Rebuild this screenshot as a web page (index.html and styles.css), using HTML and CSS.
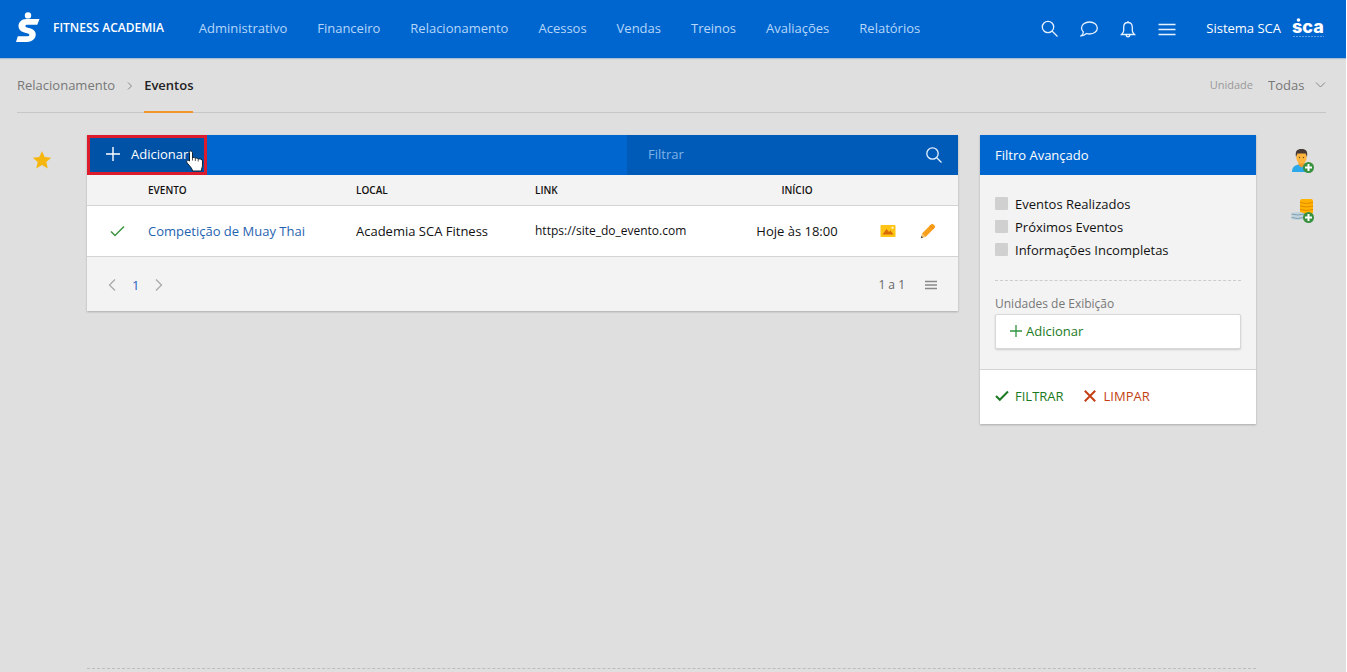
FILE: index.html
```html
<!DOCTYPE html>
<html lang="pt-BR">
<head>
<meta charset="utf-8">
<title>Eventos</title>
<link rel="stylesheet" href="styles.css">
</head>
<body>
<header class="topbar">
  <a class="brand" href="#">
    <svg class="brand-mark" width="24" height="32" viewBox="0 0 24 32" aria-hidden="true">
      <circle cx="12" cy="3.400" r="3.200" fill="#fff"/>
      <path d="M23.500 7L21.300 12.700H11.500C8.800 12.700 8.600 14.800 11 15.500L14.800 16.600C23 19 20.500 30 11 30H0L1.800 24.200H10.800C13.800 24.200 14.200 22.200 11.800 21.500L7.500 20.200C-0.500 17.800 1.500 7 10.500 7Z" fill="#fff"/>
    </svg>
    <span class="brand-name">FITNESS ACADEMIA</span>
  </a>
  <nav class="menu">
    <a href="#">Administrativo</a>
    <a href="#">Financeiro</a>
    <a href="#">Relacionamento</a>
    <a href="#">Acessos</a>
    <a href="#">Vendas</a>
    <a href="#">Treinos</a>
    <a href="#">Avaliações</a>
    <a href="#">Relatórios</a>
  </nav>
  <div class="tools">
    <button class="icon-btn" aria-label="Buscar"><svg width="18" height="18" viewBox="0 0 18 18"><circle cx="7" cy="7" r="5.700"/><path d="M11 11l5.500 5.500"/></svg></button>
    <button class="icon-btn" aria-label="Mensagens"><svg width="18" height="18" viewBox="0 0 18 18"><path d="M9.500 2C14 2 17.300 4.500 17.300 8S14 14 9.500 14C8.300 14 7.300 13.800 6.500 13.500C5 14.800 3.500 15.700 1.200 15.800C2.600 14.800 3.200 13.500 3.400 12C2.200 11 1.500 9.600 1.500 8C1.500 4.500 5 2 9.500 2Z"/></svg></button>
    <button class="icon-btn" aria-label="Notificações"><svg width="18" height="18" viewBox="0 0 18 18"><path d="M9 2.500C6.300 2.500 4.700 4.300 4.700 7V10.500C4.700 12.500 3.600 13.300 2.500 14.500H15.500C14.400 13.300 13.300 12.500 13.300 10.500V7C13.300 4.300 11.700 2.500 9 2.500ZM9 2.500V1M7.200 14.800C7.200 17.500 10.800 17.500 10.800 14.800"/></svg></button>
    <button class="icon-btn" aria-label="Menu"><svg width="18" height="18" viewBox="0 0 18 18"><path d="M0.500 4.500H17.500M0.500 9.500H17.500M0.500 14.500H17.500"/></svg></button>
  </div>
  <a class="account" href="#">
    <span>Sistema SCA</span>
    <svg width="34" height="22" viewBox="0 0 34 22" aria-hidden="true">
      <circle cx="6.500" cy="3" r="1.800" fill="#fff"/>
      <text class="account-logo" x="0" y="16">sca</text>
      <path d="M1 19.500H32" stroke="#5c9fe4" stroke-dasharray="2 1"/>
    </svg>
  </a>
</header>

<div class="page">
  <div class="crumbs">
    <a class="crumb" href="#">Relacionamento</a>
    <svg class="crumb-sep" width="6" height="10" viewBox="0 0 6 10"><path d="M1 1.500L4.500 5L1 8.500"/></svg>
    <a class="crumb crumb-current" href="#">Eventos</a>
    <label class="unit-label" for="unit">Unidade</label>
    <span class="unit-box">
      <select class="unit" id="unit"><option>Todas</option></select>
      <svg width="11" height="8" viewBox="0 0 11 8"><path d="M1 1.500L5.500 6L10 1.500"/></svg>
    </span>
  </div>

  <div class="content">
    <div class="rail rail-left">
      <button class="plain" aria-label="Favorito"><svg width="20" height="20" viewBox="0 0 20 20"><path d="M10 1L12.700 7.100L19.200 7.700L14.300 12L15.800 18.500L10 15.100L4.200 18.500L5.700 12L0.800 7.700L7.300 7.100Z" fill="#f5b70f"/></svg></button>
    </div>

    <main class="panel">
      <div class="panel-bar">
        <button class="add">
          <svg width="14" height="14" viewBox="0 0 14 14"><path d="M7 0V14M0 7H14"/></svg>
          Adicionar
          <svg class="cursor" width="18" height="22" viewBox="0 0 18 22"><path d="M4.500 1C6 1 6.500 2 6.500 3V8C7 7 9 7.200 9.300 8.500C10 7.600 12 8 12.200 9.200C13.500 8.600 16.500 9 16.500 11V15C16.500 17 15.500 18 15.500 21H6.500C6.500 18.500 3.500 16 1 12.800C-0.200 10.500 2 9.500 3.500 11V3C3 2 3.500 1 4.500 1Z" fill="#fff" stroke="#123"/><path d="M6.500 8V10.500M9.300 8.500V11M12.200 9.200V11.500" stroke="#555" fill="none"/></svg>
        </button>
        <div class="search">
          <input class="search-input" type="text" placeholder="Filtrar" aria-label="Filtrar">
          <button class="icon-btn" aria-label="Pesquisar"><svg width="18" height="18" viewBox="0 0 18 18"><circle cx="7.500" cy="7.500" r="5.700"/><path d="M11.500 11.500l5 5"/></svg></button>
        </div>
      </div>
      <table class="events">
        <colgroup><col class="c-check"><col class="c-event"><col class="c-place"><col><col class="c-start"><col class="c-actions"></colgroup>
        <thead>
          <tr><th></th><th>EVENTO</th><th>LOCAL</th><th>LINK</th><th class="center">INÍCIO</th><th></th></tr>
        </thead>
        <tbody>
          <tr>
            <td class="center"><svg class="ok" width="15" height="12" viewBox="0 0 15 12"><path d="M1 6.500L5 10.500L14 1.500"/></svg></td>
            <td><a class="event-link" href="#">Competição de Muay Thai</a></td>
            <td>Academia SCA Fitness</td>
            <td class="small">https://site_do_evento.com</td>
            <td class="center">Hoje às 18:00</td>
            <td>
              <div class="actions">
                <button class="plain" aria-label="Imagem"><svg width="16" height="14" viewBox="0 0 16 14"><rect x="0.500" y="1" width="15" height="12" rx="1" fill="#ffc414"/><path d="M2.500 10.500L6.500 5L9 8L10.500 6.500L13.500 10.500Z" fill="#d96b05"/><circle cx="12.500" cy="3.800" r="1.200" fill="#fff1b8"/></svg></button>
                <button class="plain" aria-label="Editar"><svg width="16" height="16" viewBox="0 0 16 16"><path d="M11.200 1.200C12 0.500 12.600 0.500 13.300 1.200L14.800 2.700C15.400 3.400 15.400 4 14.800 4.700L5.500 14L2 10.400Z" fill="#f9a01b"/><path d="M2 10.400L5.500 14L1 15.200Z" fill="#f3c36b"/><path d="M1.500 13L3 14.600L0.800 15.300Z" fill="#333"/><path d="M10 2.500L13.500 6" stroke="#ef7d0b"/></svg></button>
              </div>
            </td>
          </tr>
        </tbody>
      </table>
      <div class="pager">
        <button class="plain page-arrow" aria-label="Anterior"><svg width="8" height="14" viewBox="0 0 8 14"><path d="M7 1.500L1.500 7L7 12.500"/></svg></button>
        <a class="page-number" href="#">1</a>
        <button class="plain page-arrow" aria-label="Próxima"><svg width="8" height="14" viewBox="0 0 8 14"><path d="M1 1.500L6.500 7L1 12.500"/></svg></button>
        <span class="range">1 a 1</span>
        <button class="plain page-list" aria-label="Opções"><svg width="12" height="10" viewBox="0 0 12 10"><path d="M0 1.500H12M0 5H12M0 8.500H12"/></svg></button>
      </div>
    </main>

    <aside class="filter">
      <h2 class="filter-title">Filtro Avançado</h2>
      <div class="filter-body">
        <label class="check"><input type="checkbox">Eventos Realizados</label>
        <label class="check"><input type="checkbox">Próximos Eventos</label>
        <label class="check"><input type="checkbox">Informações Incompletas</label>
        <div class="units">
          <span class="units-label" id="units-label">Unidades de Exibição</span>
          <button class="units-add" aria-describedby="units-label"><svg width="12" height="12" viewBox="0 0 12 12"><path d="M6 0V12M0 6H12"/></svg>Adicionar</button>
        </div>
      </div>
      <div class="filter-actions">
        <button class="plain apply"><svg width="14" height="12" viewBox="0 0 14 12"><path d="M1 6L4.800 9.800L13 1.500"/></svg>FILTRAR</button>
        <button class="plain clear"><svg width="12" height="12" viewBox="0 0 12 12"><path d="M0.800 0.800L11.200 11.200M11.200 0.800L0.800 11.200"/></svg>LIMPAR</button>
      </div>
    </aside>

    <div class="rail rail-right">
      <button class="plain" aria-label="Novo cliente"><svg width="24" height="26" viewBox="0 0 24 26">
        <path d="M1 24C1 19 4 17 8 16.500H13C17 17 19 19 19 24Z" fill="#2ca9e8"/>
        <path d="M7.500 14H13.500V17L10.500 19.500L7.500 17Z" fill="#f09a2c"/>
        <ellipse cx="10.500" cy="9.500" rx="5.200" ry="6.300" fill="#ffb53d"/>
        <path d="M5 9C4 3 6 1 10.500 1S17 3 16 9L14.500 5.500H6.500Z" fill="#473a34"/>
        <circle cx="8.500" cy="9.500" r="0.700" fill="#6b4a20"/><circle cx="12.500" cy="9.500" r="0.700" fill="#6b4a20"/>
        <circle cx="17.500" cy="19.500" r="5.500" fill="#38913f"/><path d="M17.500 16V23M14 19.500H21" stroke="#fff" stroke-width="2"/></svg></button>
      <button class="plain" aria-label="Nova venda"><svg width="24" height="26" viewBox="0 0 24 26">
        <rect x="9" y="1" width="13" height="15" rx="2" fill="#ffb300"/><path d="M9 4.500Q15.500 6.500 22 4.500M9 8Q15.500 10 22 8M9 11.500Q15.500 13.500 22 11.500" stroke="#e28a00" fill="none"/>
        <path d="M0.500 15Q6.500 13 13 15V21Q6.500 23 0.500 21Z" fill="#c3d3dc"/><path d="M0.500 16Q6.500 18 13 16M0.500 19.500Q6.500 21.500 13 19.500" stroke="#7c9fb4" fill="none"/>
        <circle cx="17.500" cy="19.500" r="5.500" fill="#38913f"/><path d="M17.500 16V23M14 19.500H21" stroke="#fff" stroke-width="2"/></svg></button>
    </div>
  </div>
  <div class="page-end"></div>
</div>
</body>
</html>
```
FILE: styles.css
```css
* { box-sizing: border-box; }
body {
  margin: 0;
  min-height: 100vh;
  display: flex;
  flex-direction: column;
  background: #dfdfdf;
  border-right: 1px solid #fff;
  font: 13px/20px "Open Sans", "Noto Sans", sans-serif;
  color: #222;
}
a { text-decoration: none; color: inherit; }
button, input, select { font: inherit; color: inherit; }
button { cursor: pointer; }
svg { display: block; flex: none; }
.plain, .icon-btn {
  display: flex;
  align-items: center;
  padding: 0;
  border: 0;
  background: none;
}
.icon-btn svg { fill: none; stroke: #e6f1ff; stroke-width: 1.3; }

.topbar {
  display: flex;
  align-items: center;
  height: 58px;
  padding: 0 20px 2px 16px;
  background: #0066cf;
  box-shadow: 0 1px 1px #a9bdd3;
}
.brand { display: flex; align-items: center; gap: 13px; color: #fff; }
.brand-name { font-size: 12px; font-weight: 600; }
.menu { display: flex; gap: 30px; margin-left: 35px; color: #b5d6fa; }
.tools { display: flex; gap: 21px; margin-left: auto; margin-top: 2px; }
.account { display: flex; align-items: center; gap: 11px; margin-left: 30px; color: #fff; }
.account-logo { font: 800 18px Inter, "Open Sans", sans-serif; fill: #fff; }

.page { flex: 1; display: flex; flex-direction: column; }
.crumbs {
  display: flex;
  align-items: center;
  height: 55px;
  margin: 0 20px 0 17px;
  border-bottom: 1px solid #c6c6c6;
  color: #777;
}
.crumb-sep { margin: 2px 11px 0 12px; fill: none; stroke: #888; }
.crumb-current {
  align-self: stretch;
  margin-bottom: -1px;
  padding-top: 17px;
  border-bottom: 2px solid #f0962c;
  font-weight: 600;
  color: #222;
}
.unit-label { margin-left: auto; font-size: 11px; color: #999; }
.unit-box { display: flex; align-items: center; gap: 10px; margin-left: 15px; }
.unit-box svg { fill: none; stroke: #888; }
.unit { appearance: none; padding: 0; border: 0; background: none; }

.content { display: flex; align-items: flex-start; padding-top: 22px; }
.rail { display: flex; flex-direction: column; flex: none; }
.rail-left { width: 87px; padding: 15px 0 0 32px; }
.rail-right { width: 90px; padding: 13px 0 0 35px; gap: 24px; }

.panel { flex: 1; min-width: 0; background: #f3f3f3; box-shadow: 0 1px 2px #aaa; }
.panel-bar { display: flex; justify-content: space-between; height: 40px; background: #0066cf; }
.add {
  position: relative;
  display: flex;
  align-items: center;
  gap: 11px;
  padding: 0 16px 2px;
  border: 3px solid #dc1b2c;
  background: #0052a7;
  color: #fff;
}
.add svg { stroke: #fff; stroke-width: 1.4; }
.add .cursor { position: absolute; right: 0; bottom: 0; stroke-width: 1; }
.search { display: flex; align-items: center; width: 38%; padding: 0 15px 0 21px; background: #005bb8; }
.search-input { flex: 1; min-width: 0; padding: 0 0 2px; border: 0; outline: 0; background: none; }
.search-input::placeholder { color: #7fb2e8; opacity: 1; }

.events { width: 100%; table-layout: fixed; border-collapse: collapse; color: #111; }
.events th, .events td { padding: 0; text-align: left; border-bottom: 1px solid #d4d4d4; }
.events th { height: 30px; font-size: 10px; font-weight: 600; }
.events td { height: 51px; background: #fff; }
.events .center { text-align: center; }
.events .small { font-size: 12px; }
.c-check { width: 61px; }
.c-event { width: 208px; }
.c-place { width: 179px; }
.c-start { width: 122px; }
.c-actions { width: 100px; }
.event-link { color: #1f64b0; }
.ok { margin: 0 auto; fill: none; stroke: #3c9440; stroke-width: 1.5; }
.actions { display: flex; align-items: center; gap: 24px; padding-left: 22px; }

.pager { display: flex; align-items: center; height: 54px; padding: 2px 21px 0; color: #666; }
.page-arrow svg { fill: none; stroke: #aaa; stroke-width: 1.3; }
.page-number { margin: 0 16px; color: #2a63c4; }
.range { margin-left: auto; font-size: 12px; }
.page-list { margin-left: 20px; }
.page-list svg { stroke: #888; stroke-width: 1.5; }

.filter { flex: none; width: 276px; margin-left: 22px; background: #f3f3f3; box-shadow: 0 1px 2px #aaa; }
.filter-title {
  margin: 0;
  padding: 10px 15px;
  background: #0066cf;
  color: #fff;
  font-size: 13px;
  line-height: 20px;
  font-weight: 400;
}
.filter-body { padding: 17px 15px 20px; }
.check { display: flex; align-items: center; gap: 7px; height: 23px; color: #111; }
.check input { appearance: none; width: 13px; height: 13px; margin: 0; border-radius: 1px; background: #d0d0d0; }
.units { margin-top: 19px; padding-top: 13px; border-top: 1px dashed #ccc; }
.units-label { display: block; font-size: 12px; color: #777; }
.units-add {
  display: flex;
  align-items: center;
  gap: 4px;
  width: 100%;
  height: 35px;
  margin-top: 0;
  padding: 0 14px 2px;
  border: 1px solid #d8d8d8;
  border-radius: 2px;
  background: #fff;
  box-shadow: 0 1px 2px #ccc;
  color: #1c7a24;
}
.units-add svg { stroke: #2f9440; stroke-width: 1.3; }
.filter-actions { display: flex; gap: 20px; padding: 16px 15px 18px; border-top: 1px solid #d4d4d4; background: #fff; }
.filter-actions svg { fill: none; stroke: currentColor; stroke-width: 2; }
.apply { gap: 6px; color: #1b7a22; }
.clear { gap: 8px; color: #c43f14; }
.page-end { margin: auto 90px 3px 87px; border-top: 1px dashed #bdbdbd; }
```
